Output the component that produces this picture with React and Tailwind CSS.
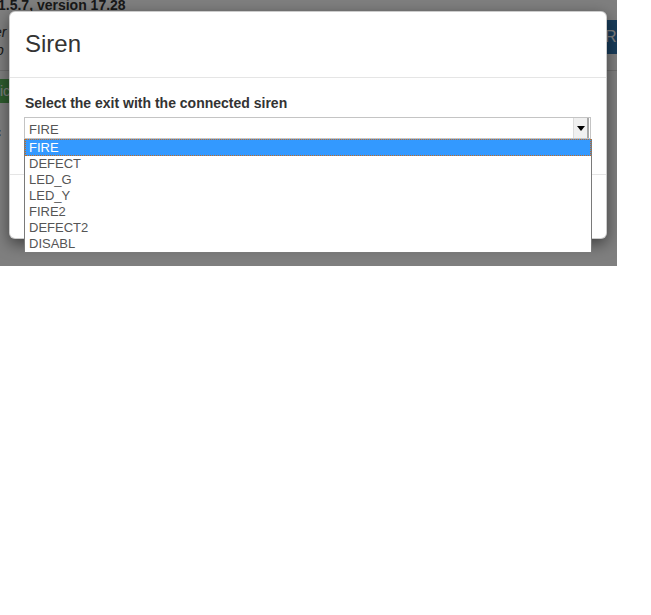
const OPTIONS = ['FIRE', 'DEFECT', 'LED_G', 'LED_Y', 'FIRE2', 'DEFECT2', 'DISABL'];

function PageBehind() {
  return (
    <div className="w-[680px] ml-[-6px] mt-[-5px] flex flex-col text-[#333]">
      <div className="pl-[4px] h-[20px] text-[14px] font-bold whitespace-nowrap leading-[20px]">1.5.7, version 17.28</div>
      <div className="flex justify-between h-[55px]">
        <div className="flex flex-col text-[14px] italic leading-[18px] pt-[8px]">
          <span>er</span>
          <span className="pl-[2px]">b</span>
        </div>
        <div className="mt-[5px] mr-[53px] w-[20px] h-[34px] bg-[#337ab7] text-white text-[16px] leading-[34px] pl-[4px] whitespace-nowrap overflow-hidden">Re</div>
      </div>
      <div className="border-t border-[#ddd]" />
      <div className="mt-[8px] w-[16px] h-[24px] bg-[#5cb85c] text-white text-[14px] leading-[24px] text-right">ic</div>
      <div className="mt-[21px] text-[14px] leading-[16px]">c</div>
    </div>
  );
}

export default function App() {
  return (
    <div className="w-[651px] h-[615px] bg-white font-['Liberation_Sans',Arial,sans-serif]">
      <div className="relative w-[617px] h-[266px] overflow-hidden bg-white">
        <PageBehind />

        {/* backdrop */}
        <div className="absolute inset-0 bg-black/50" />

        {/* modal */}
        <div className="absolute left-[9px] top-[11px] w-[598px] h-[228px] bg-white rounded-[6px] border border-black/20 shadow-[0_5px_15px_rgba(0,0,0,0.5)] flex flex-col">
          <div className="h-[66px] flex items-center px-[15px] border-b border-[#e5e5e5]">
            <h3 className="text-[24px] leading-none text-[#333] mt-[-2px]">Siren</h3>
          </div>
          <div className="h-[97px] px-[15px] pt-[17px] border-b border-[#e5e5e5]">
            <label className="block text-[14px] font-bold text-[#333] leading-[16px]">Select the exit with the connected siren</label>
            <div className="mt-[6px] ml-[-1px] w-[567px] h-[22px] border border-[#c4c4c4] flex items-center bg-white">
              <span className="flex-1 pl-[4px] pt-[3px] text-[13px] text-[#555] leading-none">FIRE</span>
              <span className="w-[16px] h-[20px] bg-[#f0f0f0] border-l border-[#dcdcdc] border-r-2 border-r-[#a8a8a8] flex items-center justify-center mr-[1px]">
                <svg width="8" height="5" viewBox="0 0 8 5"><path d="M0 0h8L4 5z" fill="#000" /></svg>
              </span>
            </div>
          </div>
          <div className="flex-1" />
        </div>

        {/* open select list */}
        <div className="absolute left-[24px] top-[139px] w-[568px] border border-t-0 border-[#7a7a7a] bg-white">
          {OPTIONS.map((o, i) => (
            <div
              key={o}
              className={
                i === 0
                  ? 'h-[17px] pl-[3px] text-[13px] leading-[16px] text-white bg-[#3399ff] border border-dotted border-[#c86a1e]'
                  : 'h-[16px] pl-[4px] text-[13px] leading-[16px] text-[#555]'
              }
            >
              {o}
            </div>
          ))}
        </div>
      </div>
    </div>
  );
}
